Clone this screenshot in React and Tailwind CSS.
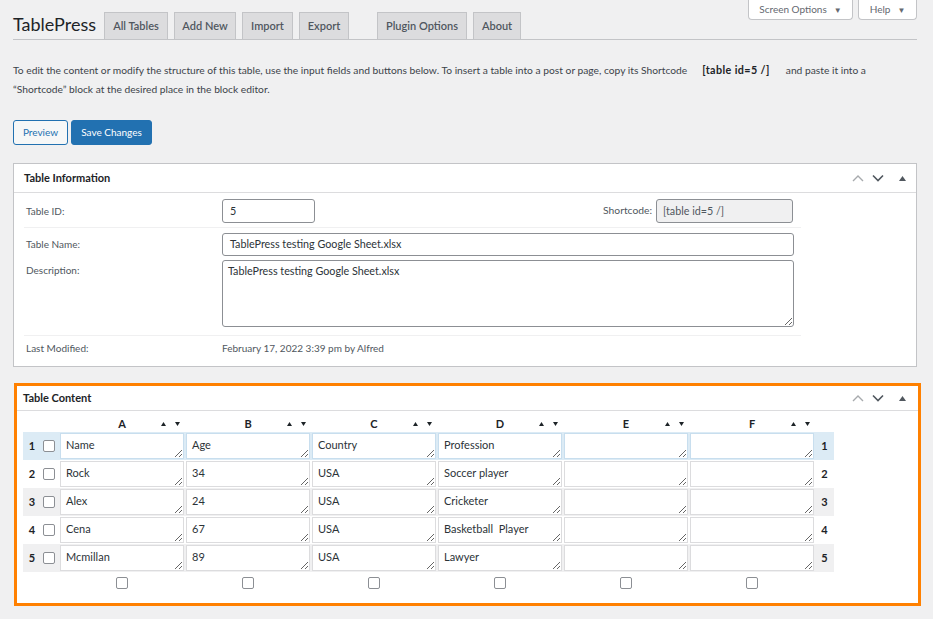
import React from "react";

const rows = [
  ["Name", "Age", "Country", "Profession", "", ""],
  ["Rock", "34", "USA", "Soccer player", "", ""],
  ["Alex", "24", "USA", "Cricketer", "", ""],
  ["Cena", "67", "USA", "Basketball  Player", "", ""],
  ["Mcmillan", "89", "USA", "Lawyer", "", ""],
];
const rowBg = ["bg-[#dcebf5]", "bg-white", "bg-[#f0f0f1]", "bg-white", "bg-[#f0f0f1]"];
const cols = ["A", "B", "C", "D", "E", "F"];

function Checkbox() {
  return <span className="block w-[12px] h-[12px] rounded-[2px] border border-[#8c8f94] bg-white" />;
}

function PanelIcons() {
  return (
    <div className="flex items-center">
      <svg width="12" height="8" viewBox="0 0 12 8" className="mr-[8px]">
        <polyline points="1,7 6,2 11,7" fill="none" stroke="#a7aaad" strokeWidth="1.4" />
      </svg>
      <svg width="12" height="8" viewBox="0 0 12 8" className="mr-[15px]">
        <polyline points="1,1.5 6,6.5 11,1.5" fill="none" stroke="#50575e" strokeWidth="1.6" />
      </svg>
      <svg width="7" height="5" viewBox="0 0 7 5">
        <polygon points="0,5 3.5,0 7,5" fill="#50575e" />
      </svg>
    </div>
  );
}

function SortArrows() {
  return (
    <span className="absolute right-[5px] top-[11px] flex items-center gap-[9px]">
      <svg width="5" height="4" viewBox="0 0 5 4"><polygon points="0,4 2.5,0 5,4" fill="#1d2327" /></svg>
      <svg width="5" height="4" viewBox="0 0 5 4"><polygon points="0,0 5,0 2.5,4" fill="#1d2327" /></svg>
    </span>
  );
}

function Tab({ w, children }) {
  return (
    <div className={`${w} h-[27px] flex items-center justify-center bg-[#dcdcde] border border-b-0 border-[#c3c4c7] text-[11px] font-semibold text-[#50575e]`}>
      {children}
    </div>
  );
}

export default function App() {
  return (
    <div className="relative w-[933px] h-[619px] overflow-hidden bg-[#f0f0f1] font-['Lato',sans-serif] text-[#3c434a]">
      {/* screen meta links */}
      <div className="absolute top-0 right-[16px] flex gap-[5px]">
        <div className="w-[105px] h-[20px] bg-white border border-t-0 border-[#c3c4c7] rounded-b-[4px] flex items-center justify-center text-[10px] text-[#646970]">
          Screen Options<span className="ml-[7px] text-[8px]">▼</span>
        </div>
        <div className="w-[59px] h-[20px] bg-white border border-t-0 border-[#c3c4c7] rounded-b-[4px] flex items-center justify-center text-[10px] text-[#646970]">
          Help<span className="ml-[7px] text-[8px]">▼</span>
        </div>
      </div>

      <div className="pl-[13px] w-[917px]">
        {/* Title + tabs */}
        <div className="pt-[12px] flex items-start border-b border-[#c3c4c7]">
          <div className="w-[91px] mt-[2px] text-[18px] leading-[20px] text-[#1d2327]">TablePress</div>
          <div className="flex gap-[6px]">
            <Tab w="w-[64px]">All Tables</Tab>
            <Tab w="w-[62px]">Add New</Tab>
            <Tab w="w-[51px]">Import</Tab>
            <Tab w="w-[50px]">Export</Tab>
            <div className="w-[16px]" />
            <Tab w="w-[90px]">Plugin Options</Tab>
            <Tab w="w-[48px]">About</Tab>
          </div>
        </div>

        {/* description */}
        <p className="mt-[21px] text-[10.25px] leading-[19px] text-[#3c434a] whitespace-nowrap">
          To edit the content or modify the structure of this table, use the input fields and buttons below. To insert a table into a post or page, copy its Shortcode
          <span className="ml-[15px] mr-[16px] text-[10.75px] leading-[10px] tracking-[0.4px] font-bold text-[#1d2327]">[table id=5 /]</span>
          and paste it into a
          <br />
          “Shortcode” block at the desired place in the block editor.
        </p>

        {/* buttons */}
        <div className="mt-[21px] flex gap-[3px]">
          <div className="w-[55px] h-[25px] rounded-[3px] border border-[#2271b1] bg-[#f6f7f7] text-[#2271b1] text-[10px] flex items-center justify-center">Preview</div>
          <div className="w-[81px] h-[25px] rounded-[3px] border border-[#2271b1] bg-[#2271b1] text-white text-[10px] flex items-center justify-center">Save Changes</div>
        </div>

        {/* Table Information */}
        <div className="mt-[18px] w-[904px] bg-white border border-[#c3c4c7]">
          <div className="h-[29px] flex items-center justify-between pl-[10px] pr-[10px] border-b border-[#dcdcde]">
            <div className="text-[11px] font-bold text-[#1d2327]">Table Information</div>
            <PanelIcons />
          </div>
          <div className="pl-[10px]">
            <div className="w-[777px]">
              <div className="flex items-center pt-[6px] pb-[4px] border-b border-[#f0f0f1]">
                <div className="w-[198px] pl-[2px] text-[10px] text-[#50575e]">Table ID:</div>
                <div className="w-[93px] h-[24px] rounded-[3px] border border-[#8c8f94] px-[7px] flex items-center text-[10.75px] text-[#2c3338]">5</div>
                <div className="flex-1 flex items-center justify-end pr-[8px]">
                  <span className="text-[10.3px] text-[#50575e] mr-[4px]">Shortcode:</span>
                  <div className="w-[137px] h-[24px] rounded-[3px] border border-[#8c8f94] bg-[#f0f0f1] px-[6px] flex items-center text-[10.75px] text-[#50575e]">[table id=5 /]</div>
                </div>
              </div>
              <div className="pt-[5px] pb-[8px] border-b border-[#f0f0f1]">
                <div className="flex items-center">
                  <div className="w-[198px] pl-[2px] text-[10px] text-[#50575e]">Table Name:</div>
                  <div className="w-[572px] h-[23px] rounded-[3px] border border-[#8c8f94] px-[7px] flex items-center text-[10.75px] text-[#2c3338]">TablePress testing Google Sheet.xlsx</div>
                </div>
                <div className="flex items-start mt-[4px]">
                  <div className="w-[198px] pl-[2px] pt-[3px] text-[10px] leading-[15px] text-[#50575e]">Description:</div>
                  <textarea
                    readOnly
                    defaultValue="TablePress testing Google Sheet.xlsx"
                    className="w-[572px] h-[67px] rounded-[3px] border border-[#8c8f94] px-[5px] py-[2px] text-[10.75px] leading-[15px] text-[#2c3338] bg-white outline-none overflow-hidden"
                  />
                </div>
              </div>
              <div className="flex pt-[5px] pb-[10px]">
                <div className="w-[198px] pl-[2px] text-[10px] leading-[15px] text-[#50575e]">Last Modified:</div>
                <div className="text-[10px] leading-[15px] text-[#50575e]">February 17, 2022 3:39 pm by Alfred</div>
              </div>
            </div>
          </div>
        </div>
      </div>

      {/* Table Content (highlighted) */}
      <div className="mt-[16px] ml-[14px] w-[907px] bg-white border-[3px] border-[#ff8000]">
        <div className="h-[25px] flex items-center justify-between pl-[6px] pr-[12px] border-b border-[#dcdcde]">
          <div className="text-[11px] font-bold text-[#1d2327]">Table Content</div>
          <PanelIcons />
        </div>
        <div className="pl-[6px] pb-[14px]">
          {/* column headers */}
          <div className="flex h-[21px]">
            <div className="w-[36px]" />
            {cols.map((c) => (
              <div key={c} className="relative w-[126px] text-center pt-[5px] text-[11px] leading-[15px] font-bold text-[#1d2327]">
                {c}
                <SortArrows />
              </div>
            ))}
          </div>
          {rows.map((r, i) => (
            <div key={i} className={`flex items-center h-[28px] w-[811px] ${rowBg[i]}`}>
              <div className="w-[18px] text-center text-[11px] font-bold text-[#1d2327]">{i + 1}</div>
              <div className="w-[18px] pl-[2px]"><Checkbox /></div>
              {r.map((v, j) => (
                <div key={j} className="w-[126px] px-[1px] py-[1px]">
                  <textarea
                    readOnly
                    defaultValue={v}
                    className={`block w-[124px] h-[26px] border ${i === 0 ? "border-[#c8deee]" : "border-[#dcdcde]"} bg-white px-[5px] py-[3px] text-[11px] leading-[15px] text-[#2c3338] outline-none overflow-hidden whitespace-pre`}
                  />
                </div>
              ))}
              <div className="w-[19px] text-center text-[11px] font-bold text-[#1d2327]">{i + 1}</div>
            </div>
          ))}
          {/* bottom checkboxes */}
          <div className="flex pt-[5px]">
            <div className="w-[36px]" />
            {cols.map((c) => (
              <div key={c} className="w-[126px] flex justify-center"><Checkbox /></div>
            ))}
          </div>
        </div>
      </div>
    </div>
  );
}
